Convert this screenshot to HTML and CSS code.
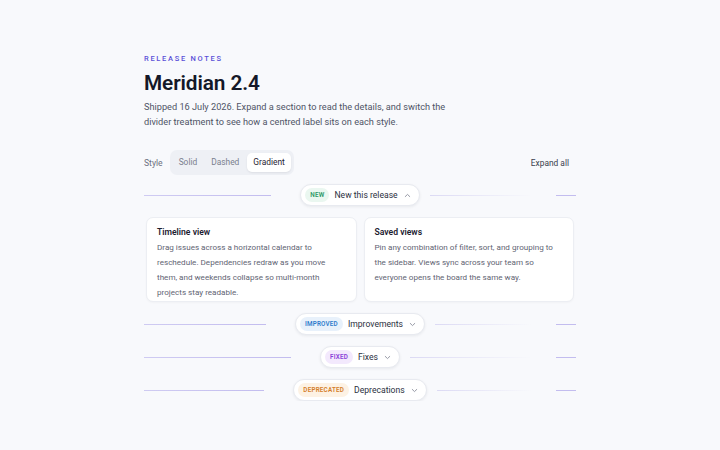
FILE: index.html
```html
<!DOCTYPE html>
<html lang="en">
<head>
  <meta charset="UTF-8" />
  <meta name="viewport" content="width=device-width, initial-scale=1.0" />
  <title>Meridian 2.4 — Release notes</title>
  <link rel="stylesheet" href="styles.css">
</head>
<body>
  <main class="page">
    <div class="eyebrow">Release notes</div>
    <h1 class="title">Meridian 2.4</h1>
    <p class="intro">Shipped 16 July 2026. Expand a section to read the details, and switch the divider treatment to see how a centred label sits on each style.</p>

    <div class="toolbar">
      <div class="style-picker">
        <span class="picker-label">Style</span>
        <div class="segmented">
          <button class="seg">Solid</button>
          <button class="seg">Dashed</button>
          <button class="seg active">Gradient</button>
        </div>
      </div>
      <button class="expand-all">Expand all</button>
    </div>

    <section class="release open">
      <div class="divider">
        <span class="line left"></span>
        <button class="pill">
          <span class="tag tag-new">New</span>
          <span class="pill-text">New this release</span>
          <svg class="chev" viewBox="0 0 10 10"><path d="M2.5 6.2 5 3.8 7.5 6.2"/></svg>
        </button>
        <span class="line right"></span>
      </div>
      <div class="cards">
        <article class="card">
          <h3>Timeline view</h3>
          <p>Drag issues across a horizontal calendar to reschedule. Dependencies redraw as you move them, and weekends collapse so multi-month projects stay readable.</p>
        </article>
        <article class="card">
          <h3>Saved views</h3>
          <p>Pin any combination of filter, sort, and grouping to the sidebar. Views sync across your team so everyone opens the board the same way.</p>
        </article>
      </div>
    </section>

    <section class="release">
      <div class="divider">
        <span class="line left"></span>
        <button class="pill">
          <span class="tag tag-improved">Improved</span>
          <span class="pill-text">Improvements</span>
          <svg class="chev" viewBox="0 0 10 10"><path d="M2.5 3.8 5 6.2 7.5 3.8"/></svg>
        </button>
        <span class="line right"></span>
      </div>
    </section>

    <section class="release">
      <div class="divider">
        <span class="line left"></span>
        <button class="pill">
          <span class="tag tag-fixed">Fixed</span>
          <span class="pill-text">Fixes</span>
          <svg class="chev" viewBox="0 0 10 10"><path d="M2.5 3.8 5 6.2 7.5 3.8"/></svg>
        </button>
        <span class="line right"></span>
      </div>
    </section>

    <section class="release">
      <div class="divider">
        <span class="line left"></span>
        <button class="pill">
          <span class="tag tag-deprecated">Deprecated</span>
          <span class="pill-text">Deprecations</span>
          <svg class="chev" viewBox="0 0 10 10"><path d="M2.5 3.8 5 6.2 7.5 3.8"/></svg>
        </button>
        <span class="line right"></span>
      </div>
    </section>
  </main>
</body>
</html>
```

FILE: styles.css
```css
body {
  margin: 0;
  padding: 0;
  font-family: Roboto, Inter, "Noto Sans", sans-serif;
  background-color: #f8f9fc;
  color: #1a1e2e;
}

.page {
  width: 432px;
  margin: 0 auto;
  padding-top: 54px;
}

.eyebrow {
  font-size: 7.5px;
  font-weight: 500;
  letter-spacing: 1.7px;
  text-transform: uppercase;
  color: #5b50d8;
  line-height: 10px;
}

.title {
  margin: 5px 0 0;
  font-size: 20.8px;
  font-weight: 600;
  letter-spacing: -0.1px;
  line-height: 28px;
  color: #141828;
}

.intro {
  margin: 2px 0 0;
  width: 320px;
  font-size: 9.2px;
  line-height: 15px;
  color: #4f5466;
}

.toolbar {
  display: flex;
  justify-content: space-between;
  align-items: center;
  margin-top: 21px;
}

.style-picker {
  display: flex;
  align-items: center;
  gap: 7px;
}

.picker-label {
  font-size: 8.6px;
  color: #6b7080;
}

.segmented {
  display: flex;
  padding: 3px;
  gap: 2px;
  background-color: #eef0f5;
  border-radius: 7px;
}

.seg {
  border: none;
  background: none;
  font-family: inherit;
  font-size: 8.4px;
  color: #7a7f8e;
  padding: 4px 6px;
  border-radius: 5px;
  line-height: 11px;
}

.seg.active {
  background-color: #fff;
  color: #1f2333;
  box-shadow: 0 1px 2px rgba(20, 24, 40, 0.08);
}

.expand-all {
  border: none;
  background: none;
  font-family: inherit;
  font-size: 8.4px;
  color: #3a3e4d;
  padding: 4px 7px;
}

.release {
  margin-top: 11px;
}

.release.open {
  margin-top: 9px;
}

/* label pill stays centred, lines fill the two side columns */
.divider {
  display: grid;
  grid-template-columns: 1fr auto 1fr;
  align-items: center;
}

.line {
  height: 1px;
}

.line.left {
  margin-right: 29px;
  background: linear-gradient(90deg, #cfcbf2, #c3bdef);
}

.line.right {
  margin-left: 10px;
  position: relative;
  background: linear-gradient(90deg, #dcdaf4, rgba(220, 218, 244, 0) calc(100% - 44px));
}

.line.right::after {
  content: "";
  position: absolute;
  right: 0;
  top: 0;
  width: 20px;
  height: 1px;
  background-color: #c3bdef;
}

.pill {
  display: flex;
  align-items: center;
  gap: 5px;
  height: 22px;
  padding: 0 7px 0 4px;
  border: 1px solid #e8eaf0;
  border-radius: 11px;
  background-color: #fff;
  box-shadow: 0 1px 3px rgba(20, 24, 40, 0.07);
  font-family: inherit;
  box-sizing: border-box;
}

.tag {
  font-size: 6.3px;
  font-weight: 600;
  text-transform: uppercase;
  letter-spacing: 0.2px;
  padding: 3px 5px;
  border-radius: 7px;
  line-height: 8px;
}

.tag-new { color: #2d9766; background-color: #eaf7f0; }
.tag-improved { color: #2f7ccc; background-color: #e8f1fb; }
.tag-fixed { color: #8a3ed8; background-color: #f3e9fd; }
.tag-deprecated { color: #d47e2a; background-color: #fdf2e4; }

.pill-text {
  font-size: 8.6px;
  color: #2b2f3e;
}

.chev {
  width: 9px;
  height: 9px;
  fill: none;
  stroke: #8b8f9c;
  stroke-width: 1;
  stroke-linecap: round;
  stroke-linejoin: round;
}

.cards {
  display: grid;
  grid-template-columns: 1fr 1fr;
  gap: 7px;
  margin: 11px 2px 11px;
}

.card {
  background-color: #fff;
  border: 1px solid #eceef3;
  border-radius: 7px;
  padding: 8px 10px 1px;
  box-shadow: 0 1px 2px rgba(20, 24, 40, 0.03);
}

.card h3 {
  margin: 0;
  font-size: 8.6px;
  font-weight: 600;
  color: #1c2030;
  line-height: 13px;
}

.card p {
  margin: 1px 0 0;
  font-size: 8.1px;
  line-height: 15px;
  color: #5f6473;
}
```
